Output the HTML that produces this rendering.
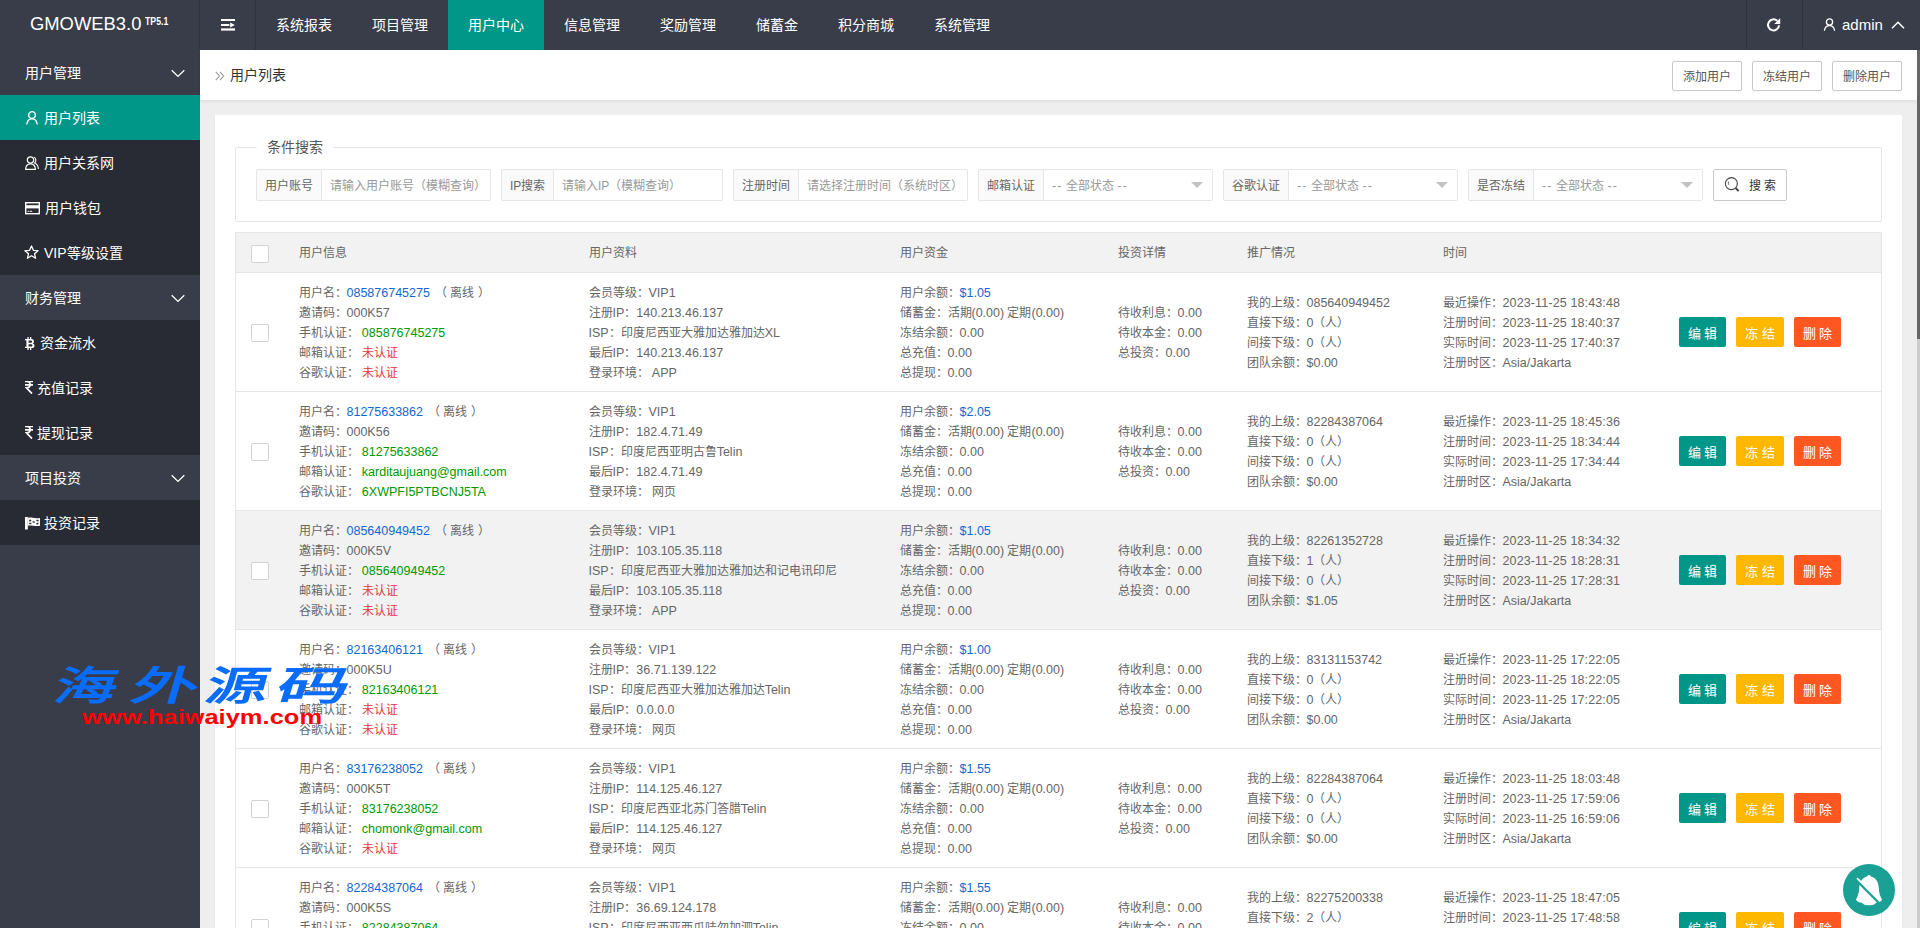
<!DOCTYPE html>
<html lang="zh-CN"><head><meta charset="utf-8">
<style>
*{box-sizing:border-box;margin:0;padding:0}
html,body{width:1920px;height:928px;overflow:hidden}
body{position:relative;background:#eeeeee;font-family:"Liberation Sans",sans-serif;font-size:14px;color:#666}
.hdr{position:absolute;left:0;top:0;width:1920px;height:50px;background:#393d49;color:#fff}
.hdr .sep{position:absolute;top:0;width:1px;height:50px;background:#30333d}
.logo{position:absolute;left:30px;top:14px;font-size:18.4px;line-height:20px;color:#fff;white-space:nowrap}
.logo2{position:absolute;left:145px;top:16px;font-size:10.4px;line-height:12px;font-weight:bold;color:#fff;white-space:nowrap;transform-origin:0 0;transform:scaleX(0.84)}
.nav{position:absolute;top:0;height:50px;line-height:50px;font-size:14px;color:#fff;white-space:nowrap}
.nav span{position:absolute;top:0;height:50px;text-align:center}
.nav .act{background:#009688}
.side{position:absolute;left:0;top:50px;width:200px;height:878px;background:#393d49;color:#fff;font-size:14px}
.side .g{position:absolute;left:0;width:200px;height:45px;line-height:47px;padding-left:25px}
.side .it{position:absolute;left:0;width:200px;height:45px;line-height:45px;background:#282b33}
.side .it.on{background:#009688}
.side .it b{font-weight:normal;position:absolute;top:1px}
.side svg{position:absolute}
.chev{position:absolute;left:171px;top:20px}
.crumb{position:absolute;left:200px;top:50px;width:1717px;height:50px;background:#fff;box-shadow:0 2px 3px rgba(0,0,0,.06)}
.crumb .t{position:absolute;left:30px;top:0;line-height:50px;font-size:14px;color:#333}
.btnp{position:absolute;top:11px;height:30px;width:70px;border:1px solid #c9c9c9;border-radius:2px;background:#fff;color:#555;font-size:12px;line-height:30px;text-align:center}
.card{position:absolute;left:215px;top:115px;width:1687px;height:900px;background:#fff;box-shadow:0 1px 2px 0 rgba(0,0,0,.05)}
.fs{position:absolute;left:20px;top:32px;width:1647px;height:75px;border:1px solid #e6e6e6;border-radius:2px}
.lg{position:absolute;left:21px;top:-11px;padding:0 10px;background:#fff;font-size:14px;color:#555;line-height:20px}
.ig{position:absolute;top:21px;height:32px}
.lab{position:absolute;top:0;height:32px;border:1px solid #e6e6e6;border-radius:2px 0 0 2px;background:#fafafa;color:#666;font-size:12px;line-height:32px;padding:0 8px;white-space:nowrap}
.inp{position:absolute;top:0;height:32px;border:1px solid #e6e6e6;border-left:none;border-radius:0 2px 2px 0;background:#fff;color:#999;font-size:12px;line-height:32px;padding-left:8px;white-space:nowrap}
.inp .tri{position:absolute;right:9px;top:12px;width:0;height:0;border-left:6px solid transparent;border-right:6px solid transparent;border-top:6px solid #c2c2c2}
.dd{letter-spacing:1.2px;font-size:12.5px}
.sbtn{position:absolute;top:21px;height:32px;border:1px solid #c9c9c9;border-radius:2px;background:#fff;color:#333;font-size:12px;line-height:32px}
table{position:absolute;left:20px;top:117px;width:1647px;border-collapse:collapse;table-layout:fixed;font-size:12px;color:#666}
th,td{border-bottom:1px solid #e6e6e6;padding:9px 15px;line-height:20px;text-align:left;font-weight:normal;vertical-align:middle;white-space:nowrap;overflow:hidden}
th{background:#f2f2f2;height:40px;padding-top:0;padding-bottom:0}
th .cb{position:relative;top:1px}
thead tr{border-top:1px solid #e6e6e6}
table{border-left:1px solid #e6e6e6;border-right:1px solid #e6e6e6}
td{height:119px;padding-top:10px;padding-bottom:8px}
tr.hov td{background:#f2f2f2}
.cb{display:inline-block;width:18px;height:18px;border:1px solid #d2d2d2;border-radius:2px;background:#fff;vertical-align:middle}
.c0{padding-left:15px;padding-right:0}
td.c0,td.c7{padding-top:9px;padding-bottom:9px}
.b{color:#1467d0}
.gr{color:#009900}
.r{color:#e5383b}
.off{margin-left:5px}
em{font-style:normal;font-size:12.5px;line-height:0}
em.d{letter-spacing:0.13px}
.tb{display:inline-block;height:30px;line-height:34px;padding:0 9px;color:#fff;font-size:13px;border-radius:2px;margin-right:10px;vertical-align:middle;overflow:hidden}
.t1{background:#009688}.t2{background:#ffb800}.t3{background:#ff5722}
.sb{position:absolute;left:1917px;top:50px;width:3px;height:878px;background:#cccccc}
.sb i{position:absolute;left:0;top:0;width:3px;height:289px;background:#666}
.wm1 b{position:absolute;top:0;font-size:40px;line-height:44px;font-weight:700;color:#0a6cfa;transform-origin:0 50%;transform:scaleX(1.55) scaleY(1.0) skewX(-10deg)}
.wm1{position:absolute;left:0;top:664px}
.wm2{position:absolute;left:82px;top:702px;font-size:21px;line-height:30px;font-weight:bold;color:#ff0000;white-space:nowrap;transform-origin:0 50%;transform:scaleX(1.215)}
.fab{position:absolute;left:1843px;top:864px;width:52px;height:52px;border-radius:50%;background:#1aa094}
</style></head><body>
<div class="hdr">
  <div class="logo">GMOWEB3.0</div><div class="logo2">TP5.1</div>
  <div class="sep" style="left:199px"></div>
  <svg style="position:absolute;left:221px;top:18px" width="15" height="14" viewBox="0 0 15 14"><rect x="0" y="1" width="14" height="2" fill="#fff"/><rect x="0" y="6" width="8.4" height="2" fill="#fff"/><rect x="0" y="10.4" width="14" height="2.2" fill="#fff"/><path d="M9.2 4.4 L13.8 7 L9.2 9.6 Z" fill="#fff"/></svg>
  <div class="sep" style="left:255px"></div>
  <div class="nav" style="left:0">
    <span style="left:256px;width:96px">系统报表</span>
    <span style="left:352px;width:96px">项目管理</span>
    <span class="act" style="left:448px;width:96px">用户中心</span>
    <span style="left:544px;width:96px">信息管理</span>
    <span style="left:640px;width:96px">奖励管理</span>
    <span style="left:736px;width:82px">储蓄金</span>
    <span style="left:818px;width:96px">积分商城</span>
    <span style="left:914px;width:96px">系统管理</span>
  </div>
  <div class="sep" style="left:1746px"></div>
  <svg style="position:absolute;left:1766px;top:17px" width="16" height="16" viewBox="0 0 16 16"><path d="M13 8.2 A5.5 5.5 0 1 1 11.2 3.8" fill="none" stroke="#fff" stroke-width="2"/><path d="M14.2 1 L14.2 7 L8.3 7 Z" fill="#fff"/></svg>
  <div class="sep" style="left:1802px"></div>
  <svg style="position:absolute;left:1823px;top:18px" width="13" height="14" viewBox="0 0 13 14"><circle cx="6.5" cy="4" r="3.1" fill="none" stroke="#fff" stroke-width="1.3"/><path d="M1.4 12.8 C1.8 9.3 3.7 7.7 6.5 7.7 C9.3 7.7 11.2 9.3 11.6 12.8" fill="none" stroke="#fff" stroke-width="1.3"/></svg>
  <div style="position:absolute;left:1842px;top:15px;font-size:15px;line-height:20px;color:#fff">admin</div>
  <svg style="position:absolute;left:1891px;top:21px" width="14" height="8" viewBox="0 0 14 8"><path d="M1 7.2 L7 1.2 L13 7.2" fill="none" stroke="#fff" stroke-width="1.5"/></svg>
</div>

<div class="side">
  <div class="g" style="top:0">用户管理</div>
  <svg class="chev" style="top:19px" width="15" height="9" viewBox="0 0 15 9"><path d="M0.7 1.2 L7 7.4 L13.3 1.2" fill="none" stroke="#fff" stroke-width="1.3"/></svg>
  <div class="it on" style="top:45px"><svg style="left:26px;top:16px" width="12" height="14" viewBox="0 0 12 14"><circle cx="6" cy="4" r="3.3" fill="none" stroke="#fff" stroke-width="1.3"/><path d="M0.8 13.5 C1.2 9.4 3.2 7.8 6 7.8 C8.8 7.8 10.8 9.4 11.2 13.5" fill="none" stroke="#fff" stroke-width="1.3"/></svg><b style="left:44px">用户列表</b></div>
  <div class="it" style="top:90px"><svg style="left:25px;top:16px" width="14" height="14" viewBox="0 0 14 14"><circle cx="5.5" cy="4" r="3.2" fill="none" stroke="#fff" stroke-width="1.2"/><path d="M0.6 13.4 C0.8 9.4 2.8 7.8 5.5 7.8 C8.2 7.8 10.2 9.4 10.4 13.4 Z" fill="none" stroke="#fff" stroke-width="1.2"/><path d="M9 1.2 C11 1.5 11.6 5.5 9.6 7 C12 7.8 13.2 10 13.4 13" fill="none" stroke="#fff" stroke-width="1.1"/></svg><b style="left:44px">用户关系网</b></div>
  <div class="it" style="top:135px"><svg style="left:25px;top:17px" width="15" height="13" viewBox="0 0 15 13"><rect x="0.7" y="0.7" width="13.6" height="11" fill="none" stroke="#fff" stroke-width="1.4"/><rect x="0.7" y="3.2" width="13.6" height="3.2" fill="#fff"/><rect x="2.6" y="8.8" width="1.4" height="1" fill="#fff"/><rect x="4.6" y="8.8" width="2.6" height="1" fill="#fff"/></svg><b style="left:45px">用户钱包</b></div>
  <div class="it" style="top:180px"><svg style="left:24px;top:15px" width="15" height="15" viewBox="0 0 15 15"><path d="M7.5 1 L9.4 5.3 L14 5.7 L10.5 8.7 L11.6 13.3 L7.5 10.8 L3.4 13.3 L4.5 8.7 L1 5.7 L5.6 5.3 Z" fill="none" stroke="#fff" stroke-width="1.3" stroke-linejoin="round"/></svg><b style="left:44px">VIP等级设置</b></div>
  <div class="g" style="top:225px">财务管理</div>
  <svg class="chev" style="top:244px" width="15" height="9" viewBox="0 0 15 9"><path d="M0.7 1.2 L7 7.4 L13.3 1.2" fill="none" stroke="#fff" stroke-width="1.3"/></svg>
  <div class="it" style="top:270px"><svg style="left:25px;top:17px" width="11" height="13" viewBox="0 0 11 13"><path fill-rule="evenodd" fill="#fff" d="M0 2 H6.5 C9.3 2 9.8 5.7 7.6 6.4 C10.4 7 10.3 11 6.8 11 H0 V9.8 H1.4 V3.2 H0 Z M3.6 3.4 V5.8 H6 C7.5 5.8 7.5 3.4 6 3.4 Z M3.6 7.2 V9.6 H6.3 C7.9 9.6 7.9 7.2 6.3 7.2 Z"/><rect x="2.4" y="0" width="1.3" height="2" fill="#fff"/><rect x="5" y="0" width="1.3" height="2" fill="#fff"/><rect x="2.4" y="11" width="1.3" height="2" fill="#fff"/><rect x="5" y="11" width="1.3" height="2" fill="#fff"/></svg><b style="left:40px">资金流水</b></div>
  <div class="it" style="top:315px"><svg style="left:25px;top:16px" width="8" height="13" viewBox="0 0 8 13"><path d="M0 0.5 H8 M0 3.8 H8 M1.5 0.5 C6.5 0.5 6.5 6.8 1.5 6.8 L7 12.6" fill="none" stroke="#fff" stroke-width="1.7"/></svg><b style="left:37px">充值记录</b></div>
  <div class="it" style="top:360px"><svg style="left:25px;top:16px" width="8" height="13" viewBox="0 0 8 13"><path d="M0 0.5 H8 M0 3.8 H8 M1.5 0.5 C6.5 0.5 6.5 6.8 1.5 6.8 L7 12.6" fill="none" stroke="#fff" stroke-width="1.7"/></svg><b style="left:37px">提现记录</b></div>
  <div class="g" style="top:405px">项目投资</div>
  <svg class="chev" style="top:424px" width="15" height="9" viewBox="0 0 15 9"><path d="M0.7 1.2 L7 7.4 L13.3 1.2" fill="none" stroke="#fff" stroke-width="1.3"/></svg>
  <div class="it" style="top:450px"><svg style="left:25px;top:17px" width="16" height="13" viewBox="0 0 16 13"><rect x="0" y="0" width="2.8" height="12.5" fill="#fff"/><path d="M2.8 0.8 C6 -0.2 9 2 15 1 L15 8.8 C9 9.8 6 7.6 2.8 8.8 Z" fill="#fff"/><rect x="4.2" y="2.8" width="2" height="1.6" fill="#282b33" transform="rotate(-20 5 3.6)"/><rect x="7.6" y="4.2" width="2.2" height="1.4" fill="#282b33" transform="rotate(20 8.6 5)"/><rect x="11.4" y="2.8" width="2.2" height="1.4" fill="#282b33"/><rect x="4.2" y="5.8" width="2.2" height="1.4" fill="#282b33"/><rect x="11.4" y="5.8" width="2" height="1.6" fill="#282b33" transform="rotate(-20 12.4 6.6)"/></svg><b style="left:44px">投资记录</b></div>
</div>

<div class="crumb">
  <svg style="position:absolute;left:15px;top:21px" width="10" height="10" viewBox="0 0 9 9"><path d="M0.7 0.7 L4 4.5 L0.7 8.3 M4.5 0.7 L7.8 4.5 L4.5 8.3" fill="none" stroke="#999" stroke-width="1"/></svg>
  <div class="t">用户列表</div>
  <div class="btnp" style="left:1472px">添加用户</div>
  <div class="btnp" style="left:1552px">冻结用户</div>
  <div class="btnp" style="left:1632px">删除用户</div>
</div>

<div class="card">
  <div class="fs">
    <div class="lg">条件搜索</div>
    <div class="ig" style="left:20px"><div class="lab" style="left:0;width:66px">用户账号</div><div class="inp" style="left:66px;width:169px">请输入用户账号（模糊查询）</div></div>
    <div class="ig" style="left:265px"><div class="lab" style="left:0;width:53px">IP搜索</div><div class="inp" style="left:53px;width:169px">请输入IP（模糊查询）</div></div>
    <div class="ig" style="left:497px"><div class="lab" style="left:0;width:66px">注册时间</div><div class="inp" style="left:66px;width:169px">请选择注册时间（系统时区）</div></div>
    <div class="ig" style="left:742px"><div class="lab" style="left:0;width:66px">邮箱认证</div><div class="inp" style="left:66px;width:169px"><span class="dd">--</span> 全部状态 <span class="dd">--</span><i class="tri"></i></div></div>
    <div class="ig" style="left:987px"><div class="lab" style="left:0;width:66px">谷歌认证</div><div class="inp" style="left:66px;width:169px"><span class="dd">--</span> 全部状态 <span class="dd">--</span><i class="tri"></i></div></div>
    <div class="ig" style="left:1232px"><div class="lab" style="left:0;width:66px">是否冻结</div><div class="inp" style="left:66px;width:169px"><span class="dd">--</span> 全部状态 <span class="dd">--</span><i class="tri"></i></div></div>
    <div class="sbtn" style="left:1477px;width:74px"><svg style="position:absolute;left:10px;top:6px" width="16" height="17" viewBox="0 0 16 17"><circle cx="7.4" cy="7.6" r="6" fill="none" stroke="#444" stroke-width="1.1"/><path d="M11.6 12 L14.6 15" stroke="#444" stroke-width="1.9"/><path d="M4.6 5.6 C4.2 6.6 4.2 7.8 4.7 8.8" fill="none" stroke="#555" stroke-width="0.9"/></svg><span style="position:absolute;left:35px;top:0">搜 索</span></div>
  </div>
  <table>
    <colgroup><col style="width:48px"><col style="width:290px"><col style="width:311px"><col style="width:218px"><col style="width:129px"><col style="width:196px"><col style="width:236px"><col></colgroup>
    <thead><tr><th class="c0"><i class="cb"></i></th><th>用户信息</th><th>用户资料</th><th>用户资金</th><th>投资详情</th><th>推广情况</th><th>时间</th><th></th></tr></thead>
    <tbody>
<tr>
<td class="c0"><i class="cb"></i></td>
<td class="c1">用户名：<span class="b"><em>085876745275</em></span><span class="off">（&nbsp;离线&nbsp;）</span><br>邀请码：<em>000K57</em><br>手机认证：&nbsp;<span class="gr"><em>085876745275</em></span><br>邮箱认证：&nbsp;<span class="r">未认证</span><br>谷歌认证：&nbsp;<span class="r">未认证</span></td>
<td class="c2">会员等级：<em>VIP1</em><br>注册<em>IP</em>：<em>140.213.46.137</em><br><em>ISP</em>：印度尼西亚大雅加达雅加达<em>XL</em><br>最后<em>IP</em>：<em>140.213.46.137</em><br>登录环境：&nbsp;<em>APP</em></td>
<td class="c3">用户余额：<span class="b"><em>$1.05</em></span><br>储蓄金：活期<em>(0.00)</em> 定期<em>(0.00)</em><br>冻结余额：<em>0.00</em><br>总充值：<em>0.00</em><br>总提现：<em>0.00</em></td>
<td class="c4">待收利息：<em>0.00</em><br>待收本金：<em>0.00</em><br>总投资：<em>0.00</em></td>
<td class="c5">我的上级：<em>085640949452</em><br>直接下级：<em>0</em>（人）<br>间接下级：<em>0</em>（人）<br>团队余额：<em>$0.00</em></td>
<td class="c6">最近操作：<em class="d">2023-11-25 18:43:48</em><br>注册时间：<em class="d">2023-11-25 18:40:37</em><br>实际时间：<em class="d">2023-11-25 17:40:37</em><br>注册时区：<em>Asia/Jakarta</em></td>
<td class="c7"><a class="tb t1">编 辑</a><a class="tb t2">冻 结</a><a class="tb t3">删 除</a></td>
</tr>
<tr>
<td class="c0"><i class="cb"></i></td>
<td class="c1">用户名：<span class="b"><em>81275633862</em></span><span class="off">（&nbsp;离线&nbsp;）</span><br>邀请码：<em>000K56</em><br>手机认证：&nbsp;<span class="gr"><em>81275633862</em></span><br>邮箱认证：&nbsp;<span class="gr"><em>karditaujuang@gmail.com</em></span><br>谷歌认证：&nbsp;<span class="gr"><em>6XWPFI5PTBCNJ5TA</em></span></td>
<td class="c2">会员等级：<em>VIP1</em><br>注册<em>IP</em>：<em>182.4.71.49</em><br><em>ISP</em>：印度尼西亚明古鲁<em>Telin</em><br>最后<em>IP</em>：<em>182.4.71.49</em><br>登录环境：&nbsp;网页</td>
<td class="c3">用户余额：<span class="b"><em>$2.05</em></span><br>储蓄金：活期<em>(0.00)</em> 定期<em>(0.00)</em><br>冻结余额：<em>0.00</em><br>总充值：<em>0.00</em><br>总提现：<em>0.00</em></td>
<td class="c4">待收利息：<em>0.00</em><br>待收本金：<em>0.00</em><br>总投资：<em>0.00</em></td>
<td class="c5">我的上级：<em>82284387064</em><br>直接下级：<em>0</em>（人）<br>间接下级：<em>0</em>（人）<br>团队余额：<em>$0.00</em></td>
<td class="c6">最近操作：<em class="d">2023-11-25 18:45:36</em><br>注册时间：<em class="d">2023-11-25 18:34:44</em><br>实际时间：<em class="d">2023-11-25 17:34:44</em><br>注册时区：<em>Asia/Jakarta</em></td>
<td class="c7"><a class="tb t1">编 辑</a><a class="tb t2">冻 结</a><a class="tb t3">删 除</a></td>
</tr>
<tr class="hov">
<td class="c0"><i class="cb"></i></td>
<td class="c1">用户名：<span class="b"><em>085640949452</em></span><span class="off">（&nbsp;离线&nbsp;）</span><br>邀请码：<em>000K5V</em><br>手机认证：&nbsp;<span class="gr"><em>085640949452</em></span><br>邮箱认证：&nbsp;<span class="r">未认证</span><br>谷歌认证：&nbsp;<span class="r">未认证</span></td>
<td class="c2">会员等级：<em>VIP1</em><br>注册<em>IP</em>：<em>103.105.35.118</em><br><em>ISP</em>：印度尼西亚大雅加达雅加达和记电讯印尼<br>最后<em>IP</em>：<em>103.105.35.118</em><br>登录环境：&nbsp;<em>APP</em></td>
<td class="c3">用户余额：<span class="b"><em>$1.05</em></span><br>储蓄金：活期<em>(0.00)</em> 定期<em>(0.00)</em><br>冻结余额：<em>0.00</em><br>总充值：<em>0.00</em><br>总提现：<em>0.00</em></td>
<td class="c4">待收利息：<em>0.00</em><br>待收本金：<em>0.00</em><br>总投资：<em>0.00</em></td>
<td class="c5">我的上级：<em>82261352728</em><br>直接下级：<em>1</em>（人）<br>间接下级：<em>0</em>（人）<br>团队余额：<em>$1.05</em></td>
<td class="c6">最近操作：<em class="d">2023-11-25 18:34:32</em><br>注册时间：<em class="d">2023-11-25 18:28:31</em><br>实际时间：<em class="d">2023-11-25 17:28:31</em><br>注册时区：<em>Asia/Jakarta</em></td>
<td class="c7"><a class="tb t1">编 辑</a><a class="tb t2">冻 结</a><a class="tb t3">删 除</a></td>
</tr>
<tr>
<td class="c0"><i class="cb"></i></td>
<td class="c1">用户名：<span class="b"><em>82163406121</em></span><span class="off">（&nbsp;离线&nbsp;）</span><br>邀请码：<em>000K5U</em><br>手机认证：&nbsp;<span class="gr"><em>82163406121</em></span><br>邮箱认证：&nbsp;<span class="r">未认证</span><br>谷歌认证：&nbsp;<span class="r">未认证</span></td>
<td class="c2">会员等级：<em>VIP1</em><br>注册<em>IP</em>：<em>36.71.139.122</em><br><em>ISP</em>：印度尼西亚大雅加达雅加达<em>Telin</em><br>最后<em>IP</em>：<em>0.0.0.0</em><br>登录环境：&nbsp;网页</td>
<td class="c3">用户余额：<span class="b"><em>$1.00</em></span><br>储蓄金：活期<em>(0.00)</em> 定期<em>(0.00)</em><br>冻结余额：<em>0.00</em><br>总充值：<em>0.00</em><br>总提现：<em>0.00</em></td>
<td class="c4">待收利息：<em>0.00</em><br>待收本金：<em>0.00</em><br>总投资：<em>0.00</em></td>
<td class="c5">我的上级：<em>83131153742</em><br>直接下级：<em>0</em>（人）<br>间接下级：<em>0</em>（人）<br>团队余额：<em>$0.00</em></td>
<td class="c6">最近操作：<em class="d">2023-11-25 17:22:05</em><br>注册时间：<em class="d">2023-11-25 18:22:05</em><br>实际时间：<em class="d">2023-11-25 17:22:05</em><br>注册时区：<em>Asia/Jakarta</em></td>
<td class="c7"><a class="tb t1">编 辑</a><a class="tb t2">冻 结</a><a class="tb t3">删 除</a></td>
</tr>
<tr>
<td class="c0"><i class="cb"></i></td>
<td class="c1">用户名：<span class="b"><em>83176238052</em></span><span class="off">（&nbsp;离线&nbsp;）</span><br>邀请码：<em>000K5T</em><br>手机认证：&nbsp;<span class="gr"><em>83176238052</em></span><br>邮箱认证：&nbsp;<span class="gr"><em>chomonk@gmail.com</em></span><br>谷歌认证：&nbsp;<span class="r">未认证</span></td>
<td class="c2">会员等级：<em>VIP1</em><br>注册<em>IP</em>：<em>114.125.46.127</em><br><em>ISP</em>：印度尼西亚北苏门答腊<em>Telin</em><br>最后<em>IP</em>：<em>114.125.46.127</em><br>登录环境：&nbsp;网页</td>
<td class="c3">用户余额：<span class="b"><em>$1.55</em></span><br>储蓄金：活期<em>(0.00)</em> 定期<em>(0.00)</em><br>冻结余额：<em>0.00</em><br>总充值：<em>0.00</em><br>总提现：<em>0.00</em></td>
<td class="c4">待收利息：<em>0.00</em><br>待收本金：<em>0.00</em><br>总投资：<em>0.00</em></td>
<td class="c5">我的上级：<em>82284387064</em><br>直接下级：<em>0</em>（人）<br>间接下级：<em>0</em>（人）<br>团队余额：<em>$0.00</em></td>
<td class="c6">最近操作：<em class="d">2023-11-25 18:03:48</em><br>注册时间：<em class="d">2023-11-25 17:59:06</em><br>实际时间：<em class="d">2023-11-25 16:59:06</em><br>注册时区：<em>Asia/Jakarta</em></td>
<td class="c7"><a class="tb t1">编 辑</a><a class="tb t2">冻 结</a><a class="tb t3">删 除</a></td>
</tr>
<tr>
<td class="c0"><i class="cb"></i></td>
<td class="c1">用户名：<span class="b"><em>82284387064</em></span><span class="off">（&nbsp;离线&nbsp;）</span><br>邀请码：<em>000K5S</em><br>手机认证：&nbsp;<span class="gr"><em>82284387064</em></span><br>邮箱认证：&nbsp;<span class="r">未认证</span><br>谷歌认证：&nbsp;<span class="r">未认证</span></td>
<td class="c2">会员等级：<em>VIP1</em><br>注册<em>IP</em>：<em>36.69.124.178</em><br><em>ISP</em>：印度尼西亚西爪哇勿加泗<em>Telin</em><br>最后<em>IP</em>：<em>36.69.124.178</em><br>登录环境：&nbsp;网页</td>
<td class="c3">用户余额：<span class="b"><em>$1.55</em></span><br>储蓄金：活期<em>(0.00)</em> 定期<em>(0.00)</em><br>冻结余额：<em>0.00</em><br>总充值：<em>0.00</em><br>总提现：<em>0.00</em></td>
<td class="c4">待收利息：<em>0.00</em><br>待收本金：<em>0.00</em><br>总投资：<em>0.00</em></td>
<td class="c5">我的上级：<em>82275200338</em><br>直接下级：<em>2</em>（人）<br>间接下级：<em>0</em>（人）<br>团队余额：<em>$0.00</em></td>
<td class="c6">最近操作：<em class="d">2023-11-25 18:47:05</em><br>注册时间：<em class="d">2023-11-25 17:48:58</em><br>实际时间：<em class="d">2023-11-25 17:48:58</em><br>注册时区：<em>Asia/Jakarta</em></td>
<td class="c7"><a class="tb t1">编 辑</a><a class="tb t2">冻 结</a><a class="tb t3">删 除</a></td>
</tr>
    </tbody>
  </table>
</div>

<div class="sb"><i></i></div>
<div class="wm1"><b style="left:56px">海</b><b style="left:133px;transform:scaleX(1.65) skewX(-10deg)">外</b><b style="left:207px">源</b><b style="left:278px;transform:scaleX(1.8) skewX(-10deg)">码</b></div>
<div class="wm2">www.haiwaiym.com</div>
<div class="fab"><svg style="position:absolute;left:0;top:0" width="52" height="52" viewBox="0 0 52 52"><path d="M26 11 C27.2 11 27.8 11.8 27.8 12.6 C33 13.8 35.5 18 35.8 24 C36 29 37 32 39 35.5 C38.5 37.5 36 38.5 33 38.8 C31 41 29 41.5 26 41.2 C23 41.5 21 41 19 38.8 C16 38.5 13.5 37.5 13 35.5 C15 32 16 29 16.2 24 C16.5 18 19 13.8 24.2 12.6 C24.2 11.8 24.8 11 26 11 Z" fill="#fff"/><path d="M13.6 16 L36 38.5" stroke="#1aa094" stroke-width="3"/><path d="M14 14.2 L37.2 37.4" stroke="#fff" stroke-width="1.8"/></svg></div>
</body></html>
